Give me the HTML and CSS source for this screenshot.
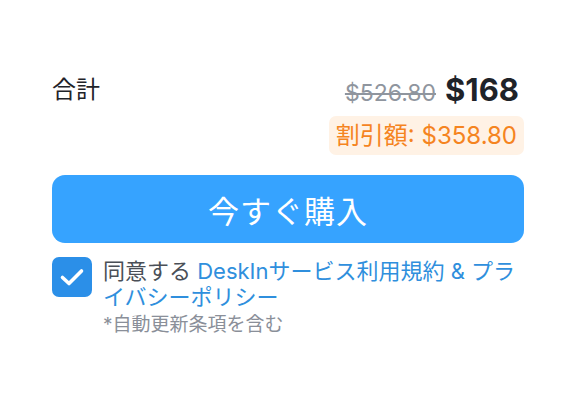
FILE: index.html
```html
<!DOCTYPE html>
<html lang="ja">
<head>
<meta charset="utf-8">
<link rel="stylesheet" href="styles.css">
</head>
<body>
<div class="panel">
  <div class="total-row">
    <div class="total-label">合計</div>
    <div class="price-col">
      <div class="prices">
        <span class="old-price">$526.80</span>
        <span class="new-price">$168</span>
      </div>
      <div class="discount">割引額: $358.80</div>
    </div>
  </div>
  <button class="buy">今すぐ購入</button>
  <div class="agree">
    <span class="check">
      <svg width="40" height="40" viewBox="0 0 40 40"><path d="M10.5 20.5 L17 26.5 L29.5 14" fill="none" stroke="#fff" stroke-width="3.6" stroke-linecap="round" stroke-linejoin="round"/></svg>
    </span>
    <div class="agree-text">
      <p class="terms">同意する <span class="link">DeskInサービス利用規約 &amp; プライバシーポリシー</span></p>
      <p class="note">*自動更新条項を含む</p>
    </div>
  </div>
</div>
</body>
</html>
```
FILE: styles.css
```css
* { box-sizing: border-box; }
body {
  margin: 0;
  background: #fff;
  font-family: "Inter", "Noto Sans CJK JP", sans-serif;
  color: #1f2329;
}
.panel {
  padding: 72px 52px 0 52px;
}
.total-row {
  display: flex;
  justify-content: space-between;
  align-items: flex-start;
}
.total-label {
  font-size: 24px;
  line-height: 36px;
}
.price-col {
  display: flex;
  flex-direction: column;
  align-items: flex-end;
}
.prices {
  display: flex;
  align-items: baseline;
  gap: 9px;
  line-height: 36px;
  padding-right: 5px;
}
.old-price {
  font-size: 23px;
  color: #8f959e;
  text-decoration: line-through;
}
.new-price {
  font-size: 31px;
  font-weight: 700;
  color: #1f2329;
}
.discount {
  margin-top: 5px;
  background: #fff2e5;
  color: #f5841f;
  font-size: 24px;
  line-height: 39px;
  padding: 0 7px 0 7px;
  border-radius: 7px;
}
.buy {
  display: block;
  width: 100%;
  height: 68px;
  margin-top: 20px;
  border: none;
  border-radius: 13px;
  background: #36a3ff;
  color: #fff;
  font-family: "Noto Sans CJK JP", sans-serif;
  font-size: 31px;
  letter-spacing: 1px;
}
.agree {
  display: flex;
  gap: 11px;
  margin-top: 14px;
}
.check {
  flex: none;
  width: 40px;
  height: 40px;
  border-radius: 7px;
  background: #2b8fe8;
  display: block;
}
.check svg { display: block; }
.agree-text p { margin: 0; }
.agree-text .terms {
  font-size: 22px;
  line-height: 26px;
  color: #4a4f57;
  padding-top: 1px;
}
.link { color: #2f8fdd; }
.agree-text .note {
  margin-top: 3px;
  font-size: 19px;
  line-height: 24px;
  color: #8a8f99;
}
```
